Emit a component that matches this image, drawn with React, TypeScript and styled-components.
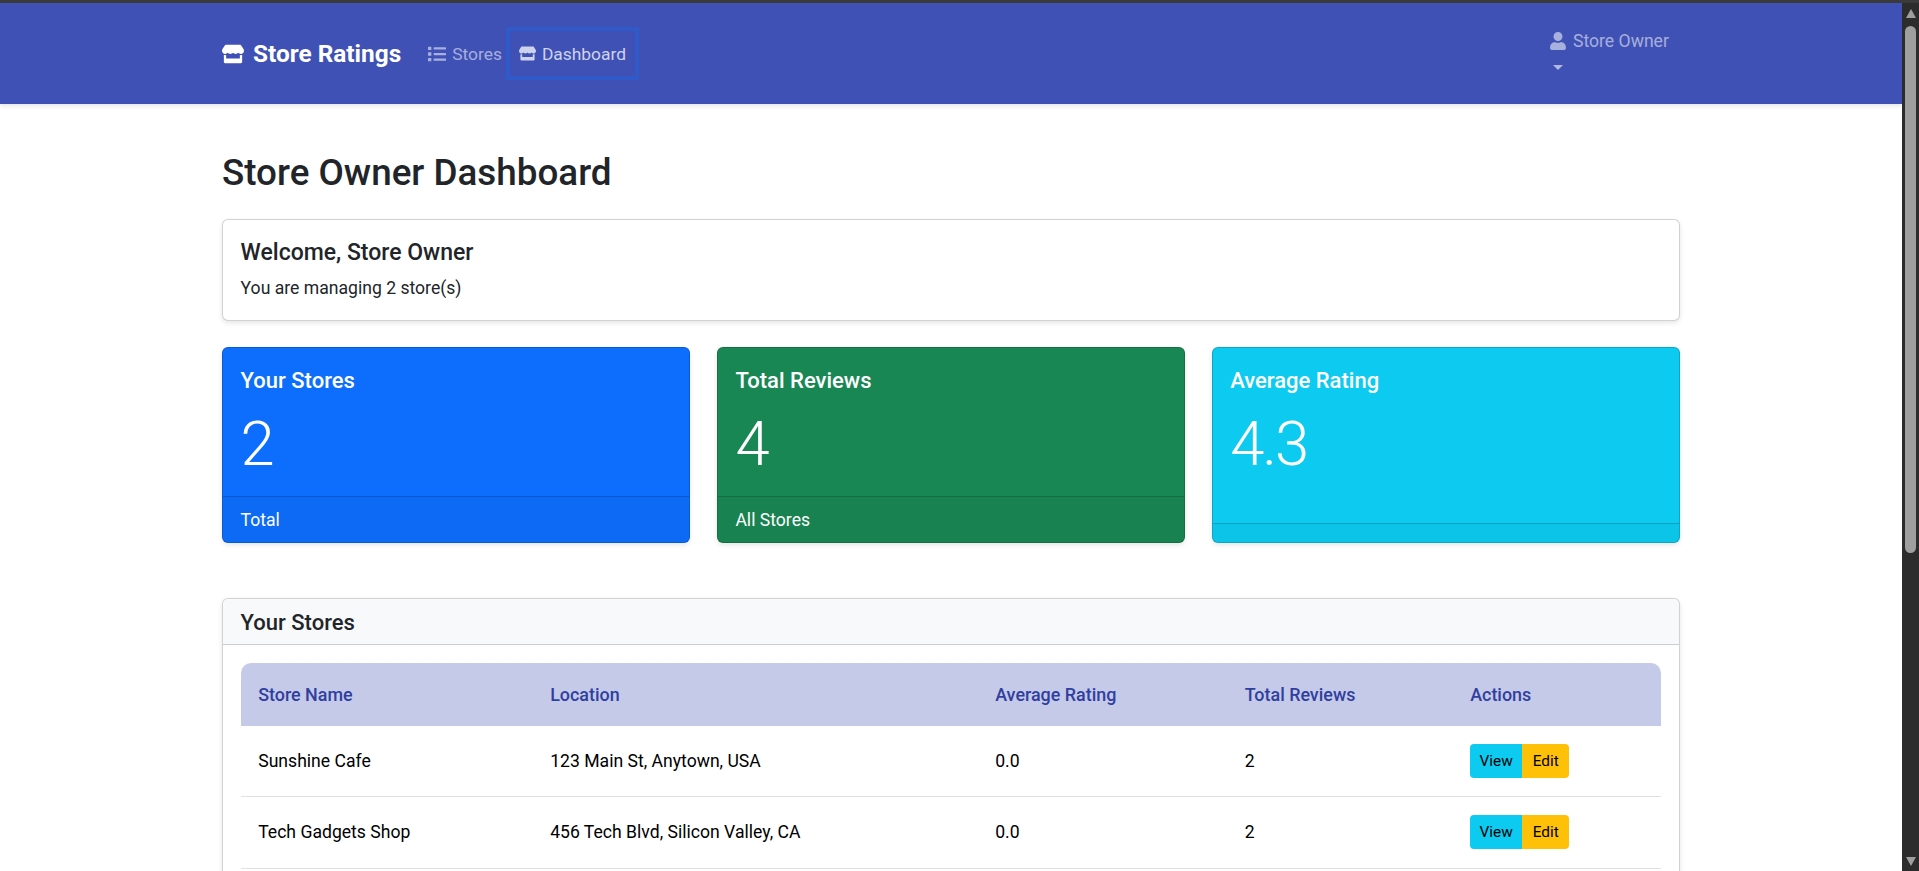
import React from "react";
import styled, { createGlobalStyle } from "styled-components";
import { FaStore, FaList, FaUser } from "react-icons/fa";

const Global = createGlobalStyle`
  html, body { margin: 0; padding: 0; height: 100%; overflow: hidden; background: #fff; }
  #root { height: 100%; }
  * { box-sizing: border-box; }
`;
const Font = `Roboto, "Open Sans", "Liberation Sans", sans-serif`;

const Shell = styled.div`
  height: 871px; display: flex; flex-direction: column; font-family: ${Font}; color: #212529; overflow: hidden;
`;
const Strip = styled.div`height: 3px; background: #3a3a3a; flex: none;`;
const Body = styled.div`flex: 1; display: flex; min-height: 0;`;
const Page = styled.div`flex: 1; min-width: 0; overflow: hidden;`;

const Scrollbar = styled.div`
  width: 17px; flex: none; background: #2c2c2c; display: flex; flex-direction: column; align-items: center;
`;
const ScrollArrow = styled.div<{ $down?: boolean }>`
  width: 0; height: 0; margin: ${(p) => (p.$down ? "auto 0 5px" : "6px 0 0")};
  border-left: 5.5px solid transparent; border-right: 5.5px solid transparent;
  ${(p) => (p.$down ? "border-top: 9px solid #9f9f9f;" : "border-bottom: 9px solid #9f9f9f;")}
`;
const ScrollThumb = styled.div`width: 11px; height: 527px; margin-top: 8px; background: #9f9f9f; border-radius: 6px;`;

const Navbar = styled.nav`
  height: 101px; background: #3f51b5; box-shadow: 0 2px 4px rgba(0,0,0,.1); padding: 0 222px 0;
  display: flex; align-items: center; position: relative;
`;
const Brand = styled.a`
  display: flex; align-items: center; gap: 9px; color: #fff; font-size: 24.4px; font-weight: 700; margin-right: 22px;
`;
const NavLink = styled.a<{ $focus?: boolean }>`
  display: flex; align-items: center; gap: 6px; color: rgba(255,255,255,.55); font-size: 17.4px; height: 53px;
  padding: ${(p) => (p.$focus ? "0 13px" : "0 4px 0 5px")};
  ${(p) => p.$focus && "color: rgba(255,255,255,.75); outline: 4px solid rgba(13,110,253,.3); outline-offset: -4px;"}
`;
const UserMenu = styled.div`
  margin-left: auto; width: 131px; margin-right: 0; color: rgba(255,255,255,.55); font-size: 17.6px; display: flex; flex-direction: column; gap: 14px; transform: translateY(-3px);
`;
const UserName = styled.div`display: flex; align-items: center; gap: 6px; white-space: nowrap;`;
const Caret = styled.span`
  width: 0; height: 0; margin-left: 4px; border-left: 5px solid transparent; border-right: 5px solid transparent; border-top: 5px solid rgba(255,255,255,.6);
`;

const Container = styled.main`width: 1458px; margin: 0 auto; padding-top: 48px;`;
const Title = styled.h1`font-size: 36.8px; font-weight: 500; margin: 0 0 25px; line-height: 42px;`;

const Card = styled.section`
  background: #fff; border: 1px solid rgba(0,0,0,.175); border-radius: 6px; box-shadow: 0 2px 5px rgba(0,0,0,.1);
`;
const Welcome = styled(Card)`height: 102px; padding: 19.6px 17.6px 0; margin-bottom: 26px;`;
const WelcomeTitle = styled.h2`font-size: 23px; font-weight: 500; margin: 0 0 8.8px; line-height: 26.4px;`;
const WelcomeText = styled.p`font-size: 17.6px; margin: 0; line-height: 26.4px;`;

const Stats = styled.div`display: grid; grid-template-columns: repeat(3, 1fr); gap: 26.4px; margin-bottom: 55px;`;
const Stat = styled.div<{ $bg: string }>`
  height: 196px; background: ${(p) => p.$bg}; color: #fff; border: 1px solid rgba(0,0,0,.175); border-radius: 6px;
  box-shadow: 0 2px 5px rgba(0,0,0,.1); display: flex; flex-direction: column;
`;
const StatBody = styled.div`flex: 1; padding: 19.6px 17.6px 0;`;
const StatLabel = styled.h3`font-size: 22px; font-weight: 500; margin: 0 0 12.8px; line-height: 26.4px;`;
const StatValue = styled.div`font-size: 61.6px; font-weight: 300; line-height: 74px; letter-spacing: -2px;`;
const StatFoot = styled.div<{ $empty?: boolean }>`
  height: ${(p) => (p.$empty ? "19px" : "46px")}; flex: none; background: rgba(0,0,0,.03); border-top: 1px solid rgba(0,0,0,.175); border-radius: 0 0 5px 5px; padding: 0 17.6px; font-size: 17.6px; display: flex; align-items: center;
`;

const Section = styled(Card)``;
const SectionHead = styled.div`height: 46px; background: #f8f9fa; border-bottom: 1px solid rgba(0,0,0,.175); border-radius: 6px 6px 0 0; padding: 1px 17.6px 0; display: flex; align-items: center;`;
const SectionTitle = styled.h2`font-size: 22px; font-weight: 500; margin: 0;`;
const SectionBody = styled.div`padding: 17.6px;`;
const Row = styled.div`
  display: grid; grid-template-columns: 292px 445px 249.5px 225.5px 1fr; align-items: center; height: 71.6px; padding: 0 17.6px; border-bottom: 1px solid #dee2e6; font-size: 17.6px; color: #000;
`;
const HeadRow = styled(Row)`height: 63px; background: #c5cae9; color: #303f9f; font-size: 17.9px; font-weight: 500; border-bottom: 0; border-radius: 10px 10px 0 0;`;
const BtnGroup = styled.div`display: inline-flex; width: max-content;`;
const Btn = styled.button<{ $bg: string; $w: number; $pos: "l" | "r" }>`
  height: 34px; width: ${(p) => p.$w}px; padding: 0; border: 0; background: ${(p) => p.$bg}; font-family: ${Font}; font-size: 15.4px; color: #000;
  border-radius: ${(p) => (p.$pos === "l" ? "4px 0 0 4px" : "0 4px 4px 0")};
`;

const rows = [
  ["Sunshine Cafe", "123 Main St, Anytown, USA", "0.0", "2"],
  ["Tech Gadgets Shop", "456 Tech Blvd, Silicon Valley, CA", "0.0", "2"],
];

export default function App() {
  return (
    <Shell>
      <Global />
      <Strip />
      <Body>
        <Page>
          <Navbar>
            <Brand><FaStore size={22} /> Store Ratings</Brand>
            <NavLink><FaList size={18} /> Stores</NavLink>
            <NavLink $focus><FaStore size={17} /> Dashboard</NavLink>
            <UserMenu>
              <UserName><FaUser size={18} /> Store Owner</UserName>
              <Caret />
            </UserMenu>
          </Navbar>
          <Container>
            <Title>Store Owner Dashboard</Title>
            <Welcome>
              <WelcomeTitle>Welcome, Store Owner</WelcomeTitle>
              <WelcomeText>You are managing 2 store(s)</WelcomeText>
            </Welcome>
            <Stats>
              <Stat $bg="#0d6efd"><StatBody><StatLabel>Your Stores</StatLabel><StatValue>2</StatValue></StatBody><StatFoot>Total</StatFoot></Stat>
              <Stat $bg="#198754"><StatBody><StatLabel>Total Reviews</StatLabel><StatValue>4</StatValue></StatBody><StatFoot>All Stores</StatFoot></Stat>
              <Stat $bg="#0dcaf0"><StatBody><StatLabel>Average Rating</StatLabel><StatValue>4.3</StatValue></StatBody><StatFoot $empty /></Stat>
            </Stats>
            <Section>
              <SectionHead><SectionTitle>Your Stores</SectionTitle></SectionHead>
              <SectionBody>
                <HeadRow><span>Store Name</span><span>Location</span><span>Average Rating</span><span>Total Reviews</span><span>Actions</span></HeadRow>
                {rows.map((r) => (
                  <Row key={r[0]}>
                    {r.map((c, i) => <span key={i}>{c}</span>)}
                    <BtnGroup><Btn $bg="#0dcaf0" $w={52} $pos="l">View</Btn><Btn $bg="#ffc107" $w={47} $pos="r">Edit</Btn></BtnGroup>
                  </Row>
                ))}
              </SectionBody>
            </Section>
          </Container>
        </Page>
        <Scrollbar><ScrollArrow /><ScrollThumb /><ScrollArrow $down /></Scrollbar>
      </Body>
    </Shell>
  );
}
